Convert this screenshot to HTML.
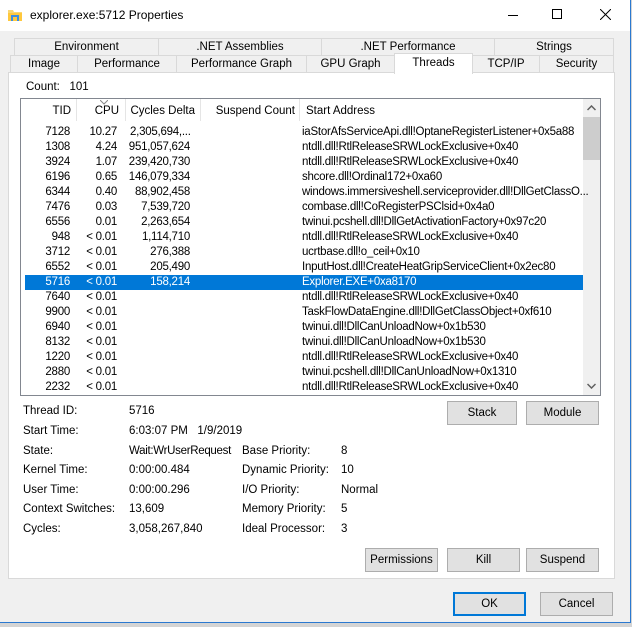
<!DOCTYPE html>
<html><head><style>
*{margin:0;padding:0;box-sizing:border-box}
body{width:632px;height:627px;overflow:hidden;background:#d4d4d4;font-family:"Liberation Sans",sans-serif;font-size:11.5px;color:#000;position:relative}
.a{position:absolute;white-space:nowrap}
#win{position:absolute;left:0;top:0;width:631px;height:623px;background:#f0f0f0;border-right:1px solid #2b79d0;border-bottom:1px solid #2b79d0}
#title{position:absolute;left:0;top:0;width:630px;height:31px;background:#fff}
.tab{position:absolute;height:18px;border:1px solid #d9d9d9;border-bottom:none;background:#f0f0f0;text-align:center;line-height:17px}
#panel{position:absolute;left:8px;top:72px;width:607px;height:507px;background:#fff;border:1px solid #d9d9d9}
#list{position:absolute;left:20px;top:98px;width:581px;height:298px;border:1px solid #828790;background:#fff;overflow:hidden}
.row{position:absolute;left:25px;width:558px;height:15px;line-height:15px;letter-spacing:-0.25px}
.row span{position:absolute;top:0;white-space:nowrap}
.sel{background:#0078d7;color:#fff}
.btn{position:absolute;height:24px;background:#e1e1e1;border:1px solid #adadad;text-align:center;line-height:22px}
.hdr{position:absolute;top:0;height:24px;line-height:24px}
.sep{position:absolute;top:0;width:1px;height:22px;background:#e5e5e5}
.t{right:513px}.c{right:466px}.d{right:393px}.s{left:277px}
</style></head><body>
<div id="win">
<div id="title">
<svg class="a" style="left:8px;top:9px" width="14" height="12"><path d="M0 1h5l1 2h8v9H0z" fill="#f8d775"/><path d="M0 4h14v8H0z" fill="#ffc83d"/><rect x="3" y="6" width="8" height="6" fill="#3d8ee0"/><rect x="5" y="8" width="4" height="4" fill="#ffc83d"/></svg>
<div class="a" style="left:30px;top:8px;font-size:12px">explorer.exe:5712 Properties</div>
<div class="a" style="left:508px;top:15px;width:10px;height:1px;background:#000"></div>
<div class="a" style="left:552px;top:9px;width:10px;height:10px;border:1px solid #000"></div>
<svg class="a" style="left:600px;top:9px" width="11" height="11"><path d="M0 0L11 11M11 0L0 11" stroke="#000" stroke-width="1"/></svg>
</div>
<div class="tab" style="left:14px;top:38px;width:145px">Environment</div>
<div class="tab" style="left:158px;top:38px;width:164px">.NET Assemblies</div>
<div class="tab" style="left:321px;top:38px;width:174px">.NET Performance</div>
<div class="tab" style="left:494px;top:38px;width:120px">Strings</div>
<div class="tab" style="left:10px;top:55px;width:68px">Image</div>
<div class="tab" style="left:77px;top:55px;width:100px">Performance</div>
<div class="tab" style="left:176px;top:55px;width:131px">Performance Graph</div>
<div class="tab" style="left:306px;top:55px;width:89px">GPU Graph</div>
<div class="tab" style="left:472px;top:55px;width:68px">TCP/IP</div>
<div class="tab" style="left:539px;top:55px;width:75px">Security</div>
<div id="panel"></div>
<div class="tab" style="left:394px;top:53px;width:79px;height:21px;background:#fff;z-index:2;line-height:18px">Threads</div>
<div class="a" style="left:26px;top:81px">Count:&nbsp;&nbsp;&nbsp;101</div>
<div id="list">
<div class="hdr" style="left:0;width:50px;text-align:right">TID</div><div class="sep" style="left:55px"></div>
<svg class="a" style="left:79px;top:1px" width="8" height="5"><path d="M0 0L4 4L8 0" fill="none" stroke="#888"/></svg>
<div class="hdr" style="left:56px;width:42px;text-align:right">CPU</div><div class="sep" style="left:104px"></div>
<div class="hdr" style="left:105px;width:69px;text-align:right">Cycles Delta</div><div class="sep" style="left:179px"></div>
<div class="hdr" style="left:180px;width:94px;text-align:right">Suspend Count</div><div class="sep" style="left:278px"></div>
<div class="hdr" style="left:285px">Start Address</div>
<div style="position:absolute;left:562px;top:0;width:17px;height:296px;background:#f0f0f0"></div>
<div style="position:absolute;left:562px;top:18px;width:17px;height:43px;background:#cdcdcd"></div>
<svg class="a" style="left:566px;top:6px" width="9" height="6"><path d="M0.5 5L4.5 1L8.5 5" fill="none" stroke="#606060" stroke-width="1.5"/></svg>
<svg class="a" style="left:566px;top:284px" width="9" height="6"><path d="M0.5 1L4.5 5L8.5 1" fill="none" stroke="#606060" stroke-width="1.5"/></svg>
</div>
<div class="btn" style="left:447px;top:401px;width:70px">Stack</div>
<div class="btn" style="left:526px;top:401px;width:73px">Module</div>
<div class="btn" style="left:365px;top:548px;width:73px">Permissions</div>
<div class="btn" style="left:447px;top:548px;width:73px">Kill</div>
<div class="btn" style="left:526px;top:548px;width:73px">Suspend</div>
<div class="btn" style="left:453px;top:592px;width:73px;border:2px solid #0078d7;line-height:20px">OK</div>
<div class="btn" style="left:540px;top:592px;width:73px">Cancel</div>
<div class="a" style="left:23px;top:405px">Thread ID:</div><div class="a" style="left:129px;top:405px">5716</div>
<div class="a" style="left:23px;top:425px">Start Time:</div><div class="a" style="left:129px;top:425px">6:03:07 PM&nbsp;&nbsp;&nbsp;1/9/2019</div>
<div class="a" style="left:23px;top:445px">State:</div><div class="a" style="left:129px;top:445px;letter-spacing:-0.3px">Wait:WrUserRequest</div>
<div class="a" style="left:23px;top:464px">Kernel Time:</div><div class="a" style="left:129px;top:464px">0:00:00.484</div>
<div class="a" style="left:23px;top:484px">User Time:</div><div class="a" style="left:129px;top:484px">0:00:00.296</div>
<div class="a" style="left:23px;top:503px">Context Switches:</div><div class="a" style="left:129px;top:503px">13,609</div>
<div class="a" style="left:23px;top:523px">Cycles:</div><div class="a" style="left:129px;top:523px">3,058,267,840</div>
<div class="a" style="left:242px;top:445px">Base Priority:</div><div class="a" style="left:341px;top:445px">8</div>
<div class="a" style="left:242px;top:464px">Dynamic Priority:</div><div class="a" style="left:341px;top:464px">10</div>
<div class="a" style="left:242px;top:484px">I/O Priority:</div><div class="a" style="left:341px;top:484px">Normal</div>
<div class="a" style="left:242px;top:503px">Memory Priority:</div><div class="a" style="left:341px;top:503px">5</div>
<div class="a" style="left:242px;top:523px">Ideal Processor:</div><div class="a" style="left:341px;top:523px">3</div>
</div>
<div style="position:absolute;left:0;top:1px">
<div class="row" style="top:124px"><span class="t">7128</span><span class="c">10.27</span><span style="left:105px">2,305,694,...</span><span class="s">iaStorAfsServiceApi.dll!OptaneRegisterListener+0x5a88</span></div>
<div class="row" style="top:139px"><span class="t">1308</span><span class="c">4.24</span><span class="d">951,057,624</span><span class="s">ntdll.dll!RtlReleaseSRWLockExclusive+0x40</span></div>
<div class="row" style="top:154px"><span class="t">3924</span><span class="c">1.07</span><span class="d">239,420,730</span><span class="s">ntdll.dll!RtlReleaseSRWLockExclusive+0x40</span></div>
<div class="row" style="top:169px"><span class="t">6196</span><span class="c">0.65</span><span class="d">146,079,334</span><span class="s">shcore.dll!Ordinal172+0xa60</span></div>
<div class="row" style="top:184px"><span class="t">6344</span><span class="c">0.40</span><span class="d">88,902,458</span><span class="s">windows.immersiveshell.serviceprovider.dll!DllGetClassO...</span></div>
<div class="row" style="top:199px"><span class="t">7476</span><span class="c">0.03</span><span class="d">7,539,720</span><span class="s">combase.dll!CoRegisterPSClsid+0x4a0</span></div>
<div class="row" style="top:214px"><span class="t">6556</span><span class="c">0.01</span><span class="d">2,263,654</span><span class="s">twinui.pcshell.dll!DllGetActivationFactory+0x97c20</span></div>
<div class="row" style="top:229px"><span class="t">948</span><span class="c">&lt; 0.01</span><span class="d">1,114,710</span><span class="s">ntdll.dll!RtlReleaseSRWLockExclusive+0x40</span></div>
<div class="row" style="top:244px"><span class="t">3712</span><span class="c">&lt; 0.01</span><span class="d">276,388</span><span class="s">ucrtbase.dll!o_ceil+0x10</span></div>
<div class="row" style="top:259px"><span class="t">6552</span><span class="c">&lt; 0.01</span><span class="d">205,490</span><span class="s">InputHost.dll!CreateHeatGripServiceClient+0x2ec80</span></div>
<div class="row sel" style="top:274px"><span class="t">5716</span><span class="c">&lt; 0.01</span><span class="d">158,214</span><span class="s">Explorer.EXE+0xa8170</span></div>
<div class="row" style="top:289px"><span class="t">7640</span><span class="c">&lt; 0.01</span><span class="s">ntdll.dll!RtlReleaseSRWLockExclusive+0x40</span></div>
<div class="row" style="top:304px"><span class="t">9900</span><span class="c">&lt; 0.01</span><span class="s">TaskFlowDataEngine.dll!DllGetClassObject+0xf610</span></div>
<div class="row" style="top:319px"><span class="t">6940</span><span class="c">&lt; 0.01</span><span class="s">twinui.dll!DllCanUnloadNow+0x1b530</span></div>
<div class="row" style="top:334px"><span class="t">8132</span><span class="c">&lt; 0.01</span><span class="s">twinui.dll!DllCanUnloadNow+0x1b530</span></div>
<div class="row" style="top:349px"><span class="t">1220</span><span class="c">&lt; 0.01</span><span class="s">ntdll.dll!RtlReleaseSRWLockExclusive+0x40</span></div>
<div class="row" style="top:364px"><span class="t">2880</span><span class="c">&lt; 0.01</span><span class="s">twinui.pcshell.dll!DllCanUnloadNow+0x1310</span></div>
<div class="row" style="top:379px"><span class="t">2232</span><span class="c">&lt; 0.01</span><span class="s">ntdll.dll!RtlReleaseSRWLockExclusive+0x40</span></div>
</div>
</body></html>
